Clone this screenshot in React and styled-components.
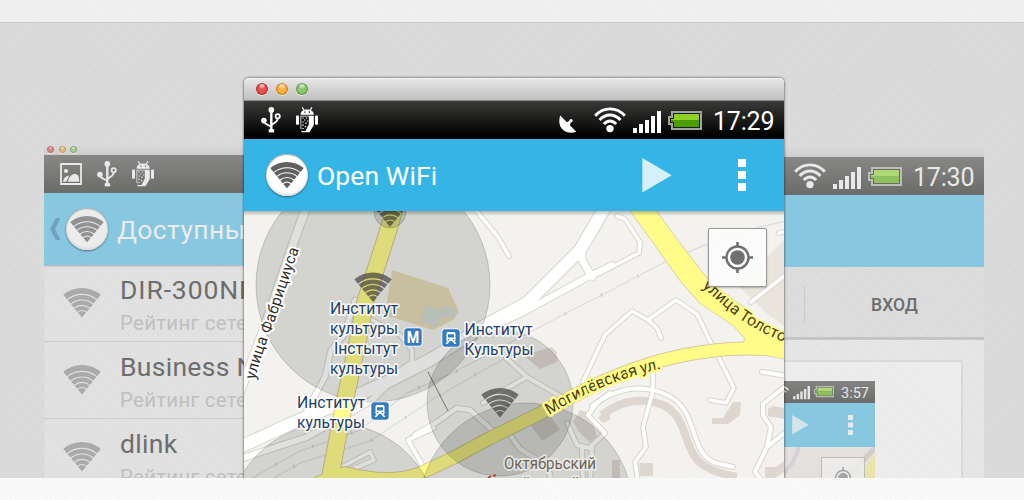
import React from "react";
import styled, { createGlobalStyle, css } from "styled-components";

const Global = createGlobalStyle`
  body { margin: 0; font-family: Roboto, "Noto Sans", sans-serif; background: #fafafa; }
  * { box-sizing: border-box; }
`;

const weave = css`
  background-image: repeating-linear-gradient(45deg, rgba(0,0,0,.014) 0 1px, transparent 1px 3px),
    repeating-linear-gradient(-45deg, rgba(255,255,255,.08) 0 1px, transparent 1px 3px);
`;

const Page = styled.div`
  width: 1024px;
  height: 500px;
  display: flex;
  flex-direction: column;
  overflow: hidden;
`;
const TopStrip = styled.div`
  height: 22px;
  background-color: #f0f0f0;
  ${weave}
`;
const BottomStrip = styled.div`
  height: 22px;
  background-color: #fafafa;
  ${weave}
`;
const Stage = styled.main`
  position: relative;
  height: 456px;
  overflow: hidden;
  border-top: 1px solid #cdcdcd;
  background-color: #dadada;
  ${weave}
`;

/* ---------- windows ---------- */

const Window = styled.section`
  position: absolute;
  left: ${(p) => p.$x}px;
  top: ${(p) => p.$y}px;
  width: 540px;
  height: 420px;
  display: flex;
  flex-direction: column;
  ${(p) =>
    p.$front &&
    css`
      border-radius: 5px 5px 0 0;
      box-shadow: 0 0 2px 1px rgba(0, 0, 0, 0.36);
    `}
`;
const TitleBar = styled.div`
  display: flex;
  align-items: center;
  flex: none;
  height: ${(p) => (p.$front ? 23 : 10)}px;
  gap: ${(p) => (p.$front ? 8 : 4.5)}px;
  padding: 0 0 ${(p) => (p.$front ? 0 : 1)}px ${(p) => (p.$front ? 12 : 3)}px;
  background: ${(p) =>
    p.$front ? "linear-gradient(#e8e8e8, #bfbfbf)" : "linear-gradient(#dadada, #cdcdcd)"};
  ${(p) =>
    p.$front &&
    css`
      border-radius: 5px 5px 0 0;
      border-bottom: 1px solid #8c8c8c;
      box-shadow: inset 0 1px #f3f3f3;
    `}
`;
const Light = styled.i`
  width: ${(p) => p.$size}px;
  height: ${(p) => p.$size}px;
  border-radius: 50%;
  background: radial-gradient(circle at 50% 18%, #fff9 0 12%, transparent 34%), ${(p) => p.$color};
  box-shadow: inset 0 0 1px 1px ${(p) => p.$edge}, 0 1px 0 #fff8;
`;
const Status = styled.div`
  flex: none;
  height: 38px;
  display: flex;
  align-items: center;
  padding: 0 10px 0 ${(p) => p.$pad}px;
  gap: 15px;
  color: ${(p) => (p.$front ? "#fff" : "#e9e9e9")};
  background: ${(p) =>
    p.$front ? "linear-gradient(#3a3a38, #000 92%)" : "linear-gradient(#878785, #6b6b6a)"};
`;
const Spacer = styled.span`
  flex: 1;
`;
const Cluster = styled.div`
  display: flex;
  align-items: center;
  gap: 7px;
  margin-left: 2px;
`;
const Clock = styled.span`
  width: 65px;
  padding: 3px 0 0 4px;
  font-size: 25px;
  line-height: 35px;
  letter-spacing: -0.2px;
  white-space: nowrap;
`;
const Header = styled.header`
  flex: none;
  height: 72px;
  display: flex;
  align-items: center;
  padding-left: ${(p) => (p.$front ? 22 : 6)}px;
  background: ${(p) => (p.$front ? "#34b5e6" : "#87c7e0")};
  color: ${(p) => (p.$front ? "#fff" : "#ebebeb")};
`;
const BackArrow = styled.svg`
  margin-right: 5px;
`;
const Badge = styled.div`
  width: 42px;
  height: 42px;
  flex: none;
  border-radius: 50%;
  display: flex;
  align-items: center;
  justify-content: center;
  background: ${(p) => (p.$front ? "#fff" : "#ececec")};
  box-shadow: 0 1px 2px rgba(0, 0, 0, 0.45), inset 0 1px 1px #aaa, inset 0 -2px 2px #ddd;
`;
const HeaderTitle = styled.h1`
  margin: 0 0 0 9px;
  font-weight: 400;
  font-size: 26.5px;
  letter-spacing: ${(p) => p.$track || 0}px;
  white-space: nowrap;
`;

/* ---------- network list ---------- */

const List = styled.div`
  flex: 1;
  background-color: #e1e1e1;
  ${weave}
  box-shadow: inset 0 2px 2px -1px #aaa;
`;
const Row = styled.div`
  height: 77px;
  display: flex;
  padding-left: 19px;
  border-bottom: 1px solid #cbcbcb;
`;
const RowIcon = styled.div`
  width: 57px;
  padding-top: 23px;
`;
const Name = styled.div`
  font-size: 26.5px;
  line-height: 32px;
  margin-top: 9px;
  letter-spacing: ${(p) => p.$track}px;
  color: #6d6d6d;
  white-space: nowrap;
`;
const Rating = styled.div`
  font-size: 20.5px;
  line-height: 26px;
  margin-top: 4px;
  letter-spacing: 0.25px;
  color: #c0c0c0;
  white-space: nowrap;
`;

/* ---------- sign-in page ---------- */

const Tabs = styled.div`
  height: 73px;
  flex: none;
  display: flex;
  align-items: center;
  justify-content: flex-end;
  padding-top: 3px;
  background-color: #dcdcdc;
  ${weave}
  border-bottom: 3px solid #c5c5c5;
`;
const Tab = styled.div`
  width: 180px;
  height: 36px;
  border-left: 1px solid #cccccc;
  display: flex;
  align-items: center;
  justify-content: center;
  padding-top: 2px;
  font-size: 17.5px;
  font-weight: 500;
  color: #6c6c6c;
`;
const Sheet = styled.div`
  flex: 1;
  padding: 20px 21px 0 0;
  background-color: #e6e6e6;
  ${weave}
`;
const Card = styled.div`
  height: 100%;
  border: 2px solid #dadada;
  background-color: #ededed;
  ${weave}
  display: flex;
  justify-content: flex-end;
  padding: 19px 86px 0 0;
`;
const Phone = styled.div`
  width: 320px;
  height: 200px;
  background: #e2e0dd;
`;
const PhoneStatus = styled.div`
  height: 22px;
  display: flex;
  align-items: center;
  justify-content: flex-end;
  padding-right: 6px;
  gap: 4px;
  background: linear-gradient(#848482, #6c6c6b);
  color: #e6e6e6;
`;
const PhoneClock = styled.span`
  margin-left: 3px;
  padding-top: 2px;
  font-size: 14.5px;
`;
const PhoneHeader = styled.div`
  height: 44px;
  display: flex;
  align-items: center;
  justify-content: flex-end;
  gap: 39px;
  padding-right: 22px;
  background: #87c7e0;
`;

/* ---------- map ---------- */

const MapArea = styled.div`
  height: 267px;
  position: relative;
`;
const MapSvg = styled.svg`
  display: block;
  font-family: Roboto, "Noto Sans", sans-serif;
`;
const HeaderShade = styled.div`
  position: absolute;
  inset: 0 0 auto 0;
  height: 5px;
  background: linear-gradient(rgba(0, 0, 0, 0.26), transparent);
`;
const Locate = styled.button`
  position: absolute;
  right: 17px;
  top: 17px;
  width: 59px;
  height: 59px;
  padding: 0;
  display: flex;
  align-items: center;
  justify-content: center;
  border: 1px solid #999;
  border-radius: 2px;
  background: rgba(252, 252, 252, 0.9);
  box-shadow: 0 1px 2px rgba(0, 0, 0, 0.25);
`;

/* ---------- icons ---------- */

const bands = [[0, 6.4], [7.5, 11.6], [12.7, 17], [18.1, 22.6], [23.7, 29.4]];
const sx = 0.637;
const sy = 0.771;
const sector = ([a, b]) =>
  `M${-b * sx} ${-b * sy}A${b} ${b} 0 0 1 ${b * sx} ${-b * sy}L${a * sx} ${-a * sy}A${a || 1} ${a || 1} 0 0 0 ${-a * sx} ${-a * sy}Z`;
const fan = bands.map(sector).join("");

const Fan = ({ w = 38, color }) => (
  <svg width={w} height={(w * 30) / 38} viewBox="-19 -29.5 38 30">
    <path d={fan} fill={color} />
  </svg>
);

const Usb = () => (
  <svg width="20" height="26" viewBox="0 0 20 26" fill="none" stroke="currentColor" strokeWidth="1.8">
    <path d="M10.3 2V24" strokeWidth="2.4" />
    <path d="M2.8 14C3 18 9 17.5 10.2 20.5M16.7 11.5C16.5 16 11.6 15.5 10.6 18.5" />
    <circle cx="16.7" cy="9.2" r="2.1" />
    <circle cx="10.3" cy="2.9" r="2.8" fill="currentColor" stroke="none" />
    <circle cx="2.9" cy="13.6" r="2.8" fill="currentColor" stroke="none" />
    <path d="M7.7 22.2h5.4v3.2H7.7z" fill="currentColor" stroke="none" />
  </svg>
);

const Bug = ({ dark }) => (
  <svg width="22" height="26" viewBox="0 0 22 26" fill="currentColor">
    <path d="M6.2 .3L8 3M16 .3L14.2 3" stroke="currentColor" strokeWidth="1.2" />
    <path d="M4.5 7.8C4.5 4.2 7.5 2.4 11.1 2.4S17.8 4.2 17.8 7.8Z" />
    <rect x="0" y="8.4" width="3" height="9.4" rx="1" />
    <rect x="19" y="8.4" width="3" height="9.4" rx="1" />
    <path d="M4.5 8.8H17.8V18L13.5 25.2H5.5V22H4.5Z" />
    <path d="M5.3 9.6H12.8V17.5L9.5 24H5.3Z" fill={dark} />
    <path d="M6.3 11h1.4M9.8 11h1.4M8 13h1.4M11 14h1.2M6.3 15h1.4M9.2 16.2h1.4M6.3 18.2h1.4M8.8 19.6h1.4M6.3 21.5h1.4" stroke="currentColor" strokeWidth="1.2" />
    <path d="M8.3 5.2h1.2M12.8 5.2h1.2" stroke={dark} strokeWidth="1.2" />
  </svg>
);

const Photo = () => (
  <svg width="22" height="22" viewBox="0 0 22 22" fill="currentColor">
    <path d="M1 1H21V21H1Z" fill="none" stroke="currentColor" strokeWidth="1.8" />
    <circle cx="6" cy="8" r="2.1" />
    <path d="M3 18.8C3.4 15 6 12.7 9.2 12.4L6.3 18.8ZM7.8 18.8C9 13.5 12 11 14.8 11C18 11 19.2 13.2 19.3 18.8Z" />
  </svg>
);

const Dish = () => (
  <svg width="18" height="26" viewBox="0 0 18 26" fill="currentColor">
    <path d="M1.2 8.500C-.8 14.500 .4 20.500 5 23.800C8.500 26.100 13.500 26.300 17.300 24.800Z" />
    <path d="M7 15.500L12.300 13.300L10.800 18.500" />
    <circle cx="12" cy="13.800" r="1.700" />
  </svg>
);

const Wifi = ({ w = 32 }) => (
  <svg width={w} height={(w * 26) / 32} viewBox="0 0 32 26" fill="none" stroke="currentColor" strokeWidth="2.9">
    <path d="M1.200 8.800C9.500-.4 22.500-.4 30.800 8.800" />
    <path d="M5.600 13C11.500 6.300 20.500 6.300 26.400 13" />
    <path d="M9.900 17.200C13.300 13 18.700 13 22.100 17.200" />
    <circle cx="16" cy="21.600" r="3.700" fill="currentColor" stroke="none" />
  </svg>
);

const SignalSvg = styled.svg`
  position: relative;
  top: ${(p) => p.$drop || 0}px;
`;
const Signal = ({ w = 28, drop }) => (
  <SignalSvg $drop={drop} width={w} height={(w * 22) / 28} viewBox="0 0 28 22" fill="currentColor">
    <path d="M0 17h4v5H0zM6 13h4v9H6zM12 9h4v13h-4zM18 5h4v17h-4zM24 0h4v22h-4z" />
  </SignalSvg>
);

const Battery = ({ w = 34, front }) => {
  const [edge, inner, a, b] = front
    ? ["#a3a3a3", "#10200a", "#8ed024", "#4b9c00"]
    : ["#bcbcba", "#66705c", "#add873", "#8fc15e"];
  return (
    <svg width={w} height={(w * 19) / 34} viewBox="0 0 34 19">
      <path d="M3 0H34V19H3V14H0V5H3Z" fill={edge} />
      <path d="M5 2H32V17H5V12H2V7H5Z" fill={inner} />
      <path d="M6 3H31V9H3V8H6Z" fill={a} />
      <path d="M3 9H31V16H6V11H3Z" fill={b} />
    </svg>
  );
};

const Play = ({ w, color }) => (
  <svg width={w} height={w * 1.15} viewBox="0 0 29 34">
    <path d="M0 0L29 17L0 34Z" fill={color} />
  </svg>
);

const Dots = ({ w, color }) => (
  <svg width={w} height={w * 4} viewBox="0 0 8 32">
    <path d="M0 0h8v8H0zM0 12h8v8H0zM0 24h8v8H0z" fill={color} />
  </svg>
);

const Target = ({ w = 31, color = "#707070" }) => (
  <svg width={w} height={w} viewBox="0 0 31 31" fill="none" stroke={color}>
    <circle cx="15.500" cy="15.500" r="11" strokeWidth="2.400" />
    <circle cx="15.500" cy="15.500" r="7.300" fill={color} stroke="none" />
    <path d="M15.500 0V5M15.500 26V31M0 15.500H5M26 15.500H31" strokeWidth="2.600" />
  </svg>
);

const HeaderActions = styled.div`
  margin-left: auto;
  padding-right: 38px;
  display: flex;
  align-items: center;
  gap: 66px;
`;

/* ---------- map data ---------- */

const roads = [
  ["M307 205L293 244L262 334L240 392", 8],
  ["M610 199L580 250L527 303L484 326L430 360L385 383L333 406L290 424L240 447", 12],
  ["M612 265L588 277L520 314L470 336L400 372L372 400L307 437L240 459", 6],
  ["M581 246L582 260L592 277", 7],
  ["M475 209L498 237L509 256", 3.6],
  ["M617 216L625 219L640 242L639 253L600 273L588 277", 3.6],
  ["M583 382L593 360L605 335L632 311L648 320L676 300L697 314L710 341L720 360L734 388L726 403L710 400", 3.6],
  ["M648 320L657 328L661 338", 3.6],
  ["M751 302L788 273M779 233L788 231", 3.6],
  ["M592 406Q630 378 667 395C700 410 688 454 716 463L733 467", 4],
  ["M653 368L653 391L643 427L646 447L635 462L638 482", 3.6],
  ["M788 384L763 404L763 415L771 427L767 447L755 472L763 482M767 447L788 430M762 372L788 376", 4],
  ["M415 435L437 422L457 408L470 410L492 430L510 435L520 449L547 465L552 482", 4.5],
  ["M506 358L527 377L560 396M527 377L504 390L483 403", 4],
  ["M610 393L597 403L588 415L605 433L589 448L577 445L567 423M582 448L583 482M592 448L590 482", 4],
  ["M434 428L408 440L425 470", 4],
  ["M342 467L370 452L374 460L353 469", 3.6],
  ["M355 300L344 335L331 350L325 377L307 410", 5],
  ["M372 320L400 335L412 350L412 362L385 380", 3.6],
];
const rails = [
  "M240 485L298 452L360 430L407 393L453 373L553 320L627 282L663 263L700 247L757 228L790 220",
  "M258 487L300 463L370 441L432 400L480 372L530 345",
];
const vertical = "M397 200L389 228L365 303L357 345L345 400L328 488";
const mogil = "M320 482L345 473Q390 485 421 473L453 458L490 438L537 415L587 389Q650 358 710 351Q745 346 790 351";
const tolstoy =
  "M626 205L653 242L680 280L700 303L733 325L745 338L742 350L790 360V342L760 322L740 305L708 280L677 240L652 205Z";
const buildings =
  "M523 355L552 347L557 352V362L540 369ZM530 425L550 415L560 430L542 441ZM573 422L580 410L590 413L597 437L590 442L580 433ZM598 418L610 405V420L603 423ZM712 418H723L733 402H741L740 415L728 424H712ZM768 409L773 406L784 408V419L768 416ZM765 467H776L784 461V472L775 478H765ZM639 463H653V476H640ZM612 460H620V478H612Z";
const zones = [
  [373, 285, 117],
  [390, 212, 16],
  [500, 403, 73],
  [526, 510, 107],
  [333, 529, 106],
];
const places = [
  ["Институт", 330, 314, 68], ["культуры", 330, 334, 68], ["Інстытут", 334, 354, 64],
  ["культуры", 330, 373.5, 68], ["Институт", 297, 408, 68], ["культуры", 297, 428, 68],
  ["Институт", 464.5, 335, 68], ["Культуры", 464.5, 355, 69],
];

const Train = ({ x, y }) => (
  <g transform={`translate(${x} ${y})`}>
    <rect x="-9.500" y="-9.500" width="19" height="19" rx="4" fill="#fff" />
    <rect x="-8.700" y="-8.700" width="17.400" height="17.400" rx="3" fill="#347cc0" />
    <path d="M-3-6H3Q4.500-6 4.500-4.500V3H-4.500V-4.500Q-4.500-6-3-6ZM-3.500 3H-1L-3.500 6H-5.500ZM3.500 3H1L3.500 6H5.500Z" fill="#fff" />
    <path d="M-3-3.800H3V-.4H-3ZM-3.200 1h1.500v1.200h-1.500zM1.700 1h1.500v1.200h-1.500z" fill="#347cc0" />
  </g>
);

const CityMap = () => (
  <MapSvg width="540" height="267" viewBox="244 211 540 267">
    <defs>
      <path id="fab" d="M255 380Q262 352 273 326L302 240" />
      <path id="mog" d="M549 415Q603 381 664 368" />
      <path id="tol" d="M702 287L731 312Q748 328 800 349" />
    </defs>
    <rect x="244" y="211" width="540" height="267" fill="#f3f2ee" />
    <path d="M784 240L768 256L736 284L770 316L784 326Z" fill="#e9e5dc" />
    <path d={buildings} fill="#ddd7d0" />
    <path d="M602 415Q622 399 647 401C688 405 681 440 696 458Q705 471 737 477" fill="none" stroke="#ddd7d0" strokeWidth="8" />
    <g fill="none" strokeLinejoin="round" strokeLinecap="round">
      {roads.map(([d, w], i) => <path key={i} d={d} stroke="#d8d5cd" strokeWidth={w + 2} />)}
      {roads.map(([d, w], i) => <path key={i} d={d} stroke="#fff" strokeWidth={w} />)}
      {rails.map((d) => (
        <g key={d}>
          <path d={d} stroke="#dedede" strokeWidth="1.400" />
          <path d={d} stroke="#c8c8ca" strokeWidth="4" strokeDasharray="1 40" strokeLinecap="butt" />
        </g>
      ))}
      <path d="M428 372L448 411" stroke="#8d8669" />
      <path d={vertical} stroke="#d5c3a0" strokeWidth="18" />
      <path d={mogil} stroke="#d9c89c" strokeWidth="14" />
      <path d={tolstoy} stroke="#d9cfa8" strokeWidth="1.500" />
      <path d={vertical} stroke="#fffc8a" strokeWidth="16" />
      <path d={mogil} stroke="#fffc8a" strokeWidth="12" />
    </g>
    <path d={tolstoy} fill="#fffc8a" />
    <path d="M392 270L448 288L459 312L453 320L433 330L385 315Z" fill="#e6d9b8" />
    <path d="M425 305L440 310L445 306L456 310L455 317L440 318L437 327L421 322Z" fill="#d2dcd4" />
    {zones.map(([cx, cy, r]) => (
      <circle key={cx} cx={cx} cy={cy} r={r} fill="#000800" fillOpacity=".13" stroke="#000" strokeOpacity=".16" />
    ))}
    {[[373, 302], [390, 227], [500, 417.5]].map(([x, y]) => (
      <path key={x} d={fan} transform={`translate(${x} ${y})`} fill="#333" fillOpacity=".64" />
    ))}
    <g fontSize="16" paintOrder="stroke" strokeLinejoin="round">
      <g fill="#1d3f69" stroke="#fff" strokeOpacity=".8" strokeWidth="3.500">
        {places.map(([t, x, y, w]) => (
          <text key={`${x}${y}`} x={x} y={y} textLength={w} lengthAdjust="spacingAndGlyphs">{t}</text>
        ))}
      </g>
      <g fill="#6c6459" stroke="#eeeeea" strokeOpacity=".8" strokeWidth="3.500">
        <text x="504" y="469" textLength="92" lengthAdjust="spacingAndGlyphs">Октябрьский</text>
        <text x="504" y="489" textLength="76">районный</text>
      </g>
      <text fontSize="15.500" fill="#35302b" stroke="#fff" strokeWidth="4">
        <textPath href="#fab" textLength="138">улица Фабрициуса</textPath>
      </text>
      <text fill="#4b3a12" stroke="#fffc8a" strokeWidth="5">
        <textPath href="#mog" textLength="122">Могилёвская ул.</textPath>
      </text>
      <text fill="#4b3a12" stroke="#fffc8a" strokeWidth="4">
        <textPath href="#tol">улица Толстого</textPath>
      </text>
    </g>
    <rect x="403.500" y="327.500" width="19" height="19" rx="4" fill="#fff" />
    <rect x="404.300" y="328.300" width="17.400" height="17.400" rx="3" fill="#347cc0" />
    <text x="413" y="343" fontSize="16" fontWeight="700" fill="#fff" textAnchor="middle" textLength="12.500" lengthAdjust="spacingAndGlyphs">М</text>
    <Train x={451} y={338} />
    <Train x={380} y={411} />
    <path d="M488 478L491 476M493 476L496 475" stroke="#b93b3b" strokeWidth="2" />
  </MapSvg>
);

const MiniMap = () => (
  <svg width="320" height="32" viewBox="555 447 320 32">
    <path d="M555 447h320v32H555z" fill="#e3e0dd" />
    <path d="M799 447L793 462L780 478" stroke="#d3d2db" strokeWidth="4" fill="none" />
    <path d="M858 478L876 452V478Z" fill="#e9e5a8" />
    <path d="M847 478L876 447" stroke="#d0cdc9" strokeWidth="5" />
    <path d="M821.500 457.500h43v30h-43z" fill="#ececeb" fillOpacity=".9" stroke="#bdbdbd" />
    <g transform="translate(843 478)" fill="none" stroke="#a5a5a5">
      <circle r="7.500" strokeWidth="1.600" />
      <circle r="5" fill="#a5a5a5" stroke="none" />
      <path d="M0-11V-8" strokeWidth="1.600" />
    </g>
  </svg>
);

const Lights = ({ front }) => {
  const size = front ? 12 : 7;
  const set = front
    ? [["#e8504c", "#9c2622"], ["#fbb040", "#b57419"], ["#8cc66d", "#4f8a3c"]]
    : [["#d98886", "#b56b69"], ["#e3bd7e", "#bd9a62"], ["#a5cf92", "#7da56d"]];
  return (
    <TitleBar $front={front}>
      {set.map(([c, e]) => <Light key={c} $size={size} $color={c} $edge={e} />)}
    </TitleBar>
  );
};

const networks = [
  ["DIR-300NRU", 0.9],
  ["Business Net", 0.3],
  ["dlink", 0.3],
];

export default function App() {
  return (
    <Page>
      <Global />
      <TopStrip />
      <Stage>
        <Window $x={44} $y={122}>
          <Lights />
          <Status $pad={16}>
            <Photo />
            <Usb />
            <Bug dark="#757574" />
          </Status>
          <Header>
            <BackArrow width="11" height="22" viewBox="0 0 11 22">
              <path d="M6 0h4.500L5 11l5.500 11H6L0 11Z" fill="#6fa3b8" />
            </BackArrow>
            <Badge><Fan w={34} color="#929292" /></Badge>
            <HeaderTitle $track={0.4}>Доступные сети</HeaderTitle>
          </Header>
          <List>
            {networks.map(([name, track]) => (
              <Row key={name}>
                <RowIcon><Fan color="#aaaaaa" /></RowIcon>
                <div>
                  <Name $track={track}>{name}</Name>
                  <Rating>Рейтинг сетей: 0</Rating>
                </div>
              </Row>
            ))}
          </List>
        </Window>

        <Window $x={444} $y={124}>
          <TitleBar />
          <Status $pad={16}>
            <Spacer />
            <Cluster>
              <Wifi /><Signal drop={2} /><Battery /><Clock>17:30</Clock>
            </Cluster>
          </Status>
          <Header />
          <Tabs><Tab>ВХОД</Tab></Tabs>
          <Sheet>
            <Card>
              <Phone>
                <PhoneStatus>
                  <Wifi w={18} /><Signal w={17} drop={1} /><Battery w={20} />
                  <PhoneClock>3:57</PhoneClock>
                </PhoneStatus>
                <PhoneHeader>
                  <Play w={17} color="#d4e4eb" />
                  <Dots w={5} color="#e8eaeb" />
                </PhoneHeader>
                <MiniMap />
              </Phone>
            </Card>
          </Sheet>
        </Window>

        <Window $x={244} $y={55} $front>
          <Lights front />
          <Status $front $pad={17}>
            <Usb />
            <Bug dark="#111" />
            <Spacer />
            <Dish />
            <Cluster>
              <Wifi /><Signal drop={2} /><Battery front /><Clock>17:29</Clock>
            </Cluster>
          </Status>
          <Header $front>
            <Badge $front><Fan w={34} color="#606060" /></Badge>
            <HeaderTitle $track={0.1}>Open WiFi</HeaderTitle>
            <HeaderActions>
              <Play w={30} color="#d6f0fa" />
              <Dots w={8} color="#fff" />
            </HeaderActions>
          </Header>
          <MapArea>
            <CityMap />
            <HeaderShade />
            <Locate><Target /></Locate>
          </MapArea>
        </Window>
      </Stage>
      <BottomStrip />
    </Page>
  );
}
